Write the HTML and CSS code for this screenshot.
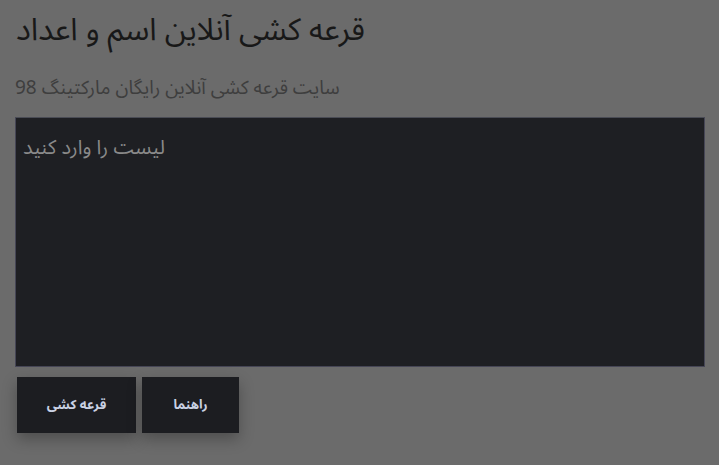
FILE: index.html
```html
<!DOCTYPE html>
<html lang="fa">
<head>
<meta charset="utf-8">
<link rel="stylesheet" href="styles.css">
</head>
<body>
<div class="page">
  <h1 class="title">قرعه کشی آنلاین اسم و اعداد</h1>
  <p class="subtitle">سایت قرعه کشی آنلاین رایگان مارکتینگ 98</p>
  <textarea class="list" placeholder="لیست را وارد کنید"></textarea>
  <div class="actions">
    <button class="btn btn-draw">قرعه کشی</button>
    <button class="btn btn-help">راهنما</button>
  </div>
</div>
</body>
</html>
```
FILE: styles.css
```css
html, body {
  margin: 0;
  padding: 0;
  background: #6b6b6b;
  height: 100%;
}
.page {
  padding: 2px 15px 0 15px;
  font-family: "Noto Sans Arabic", "DejaVu Sans", sans-serif;
  display: flex;
  flex-direction: column;
  align-items: flex-start;
}
.title {
  margin: 0;
  font-size: 31px;
  font-weight: normal;
  color: #181818;
  line-height: 56px;
  padding: 0 8px 0 1px;
  white-space: nowrap;
}
.subtitle {
  margin: 18px 0 0 0;
  font-size: 19px;
  color: #3e3e3e;
  line-height: 24px;
}
.list {
  margin-top: 17px;
  box-sizing: border-box;
  width: 690px;
  height: 250px;
  background: #1e1f23;
  border: 1px solid #464656;
  border-top-color: #4a4c55;
  padding: 18px 7px;
  font-family: "Noto Sans Arabic", "DejaVu Sans", sans-serif;
  font-size: 20px;
  line-height: 24px;
  color: #ccc;
  resize: none;
  outline: none;
}
.list::placeholder {
  color: #8a8a8a;
}
.actions {
  display: flex;
  gap: 6px;
  margin-top: 10px;
  margin-left: 2px;
}
.btn {
  height: 56px;
  border: none;
  background: #1c1d21;
  color: #c9d1e3;
  font-family: "Noto Sans Arabic", "DejaVu Sans", sans-serif;
  font-weight: bold;
  font-size: 13px;
  box-shadow: 0 6px 14px rgba(0,0,0,0.28);
  cursor: pointer;
}
.btn-draw { width: 119px; }
.btn-help { width: 97px; }
```
